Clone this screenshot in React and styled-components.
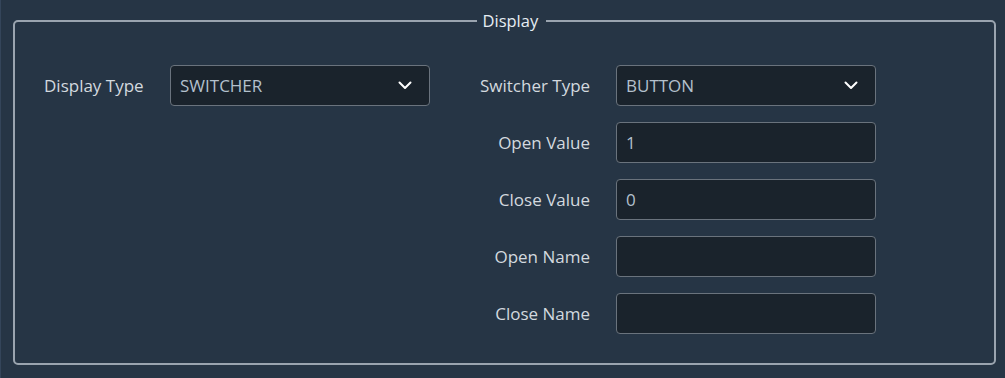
import React from "react";
import styled, { createGlobalStyle } from "styled-components";

const Global = createGlobalStyle`
  html, body { margin: 0; padding: 0; background: #263545; }
  body { font-family: "Open Sans", "Noto Sans", sans-serif; }
  * { box-sizing: border-box; }
`;

const Page = styled.div`
  width: 1005px;
  height: 378px;
  background: #263545;
  border-left: 1px solid #34455a;
  padding: 10px 9px 13px 12px;
  display: flex;
`;

const Frame = styled.fieldset`
  flex: 1;
  margin: 0;
  padding: 0;
  border: 2px solid #9aa4af;
  border-radius: 5px;
  min-width: 0;
`;

const Legend = styled.legend`
  margin-left: calc(50% - 28px);
  padding: 0 8px 0 6px;
  color: #e6edf3;
  font-size: 16.5px;
  line-height: 22px;
`;

const Body = styled.div`
  display: flex;
  align-items: flex-start;
  padding: 33px 0 0 29px;
`;

const LeftGroup = styled.div`
  display: grid;
  grid-template-columns: 99px 260px;
  column-gap: 27px;
  align-items: center;
  width: 436px;
`;

const RightGroup = styled.div`
  display: grid;
  grid-template-columns: 110px 260px;
  grid-auto-rows: 41px;
  column-gap: 26px;
  row-gap: 16px;
  align-items: center;
`;

const Label = styled.div`
  color: #d3d9df;
  font-size: 17px;
  white-space: nowrap;
  text-align: ${(p) => (p.$right ? "right" : "left")};
`;

const Box = styled.div`
  width: 260px;
  height: 41px;
  background: #1a232c;
  border: 1px solid #6a737d;
  border-radius: 4px;
  display: flex;
  align-items: center;
  justify-content: space-between;
  padding: 0 17px 0 9px;
  color: #b3c0cc;
  font-size: 17px;
`;

const Chevron = () => (
  <svg width="14" height="9" viewBox="0 0 14 9" fill="none">
    <path d="M1.5 1.5 L7 7 L12.5 1.5" stroke="#ffffff" strokeWidth="2" strokeLinecap="round" strokeLinejoin="round" />
  </svg>
);

const Select = ({ value }) => (
  <Box>
    <span>{value}</span>
    <Chevron />
  </Box>
);

const rows = [
  ["Open Value", "1"],
  ["Close Value", "0"],
  ["Open Name", ""],
  ["Close Name", ""],
];

export default function App() {
  return (
    <>
      <Global />
      <Page>
        <Frame>
          <Legend>Display</Legend>
          <Body>
            <LeftGroup>
              <Label>Display Type</Label>
              <Select value="SWITCHER" />
            </LeftGroup>
            <RightGroup>
              <Label $right>Switcher Type</Label>
              <Select value="BUTTON" />
              {rows.map(([l, v]) => (
                <React.Fragment key={l}>
                  <Label $right>{l}</Label>
                  <Box>{v}</Box>
                </React.Fragment>
              ))}
            </RightGroup>
          </Body>
        </Frame>
      </Page>
    </>
  );
}
